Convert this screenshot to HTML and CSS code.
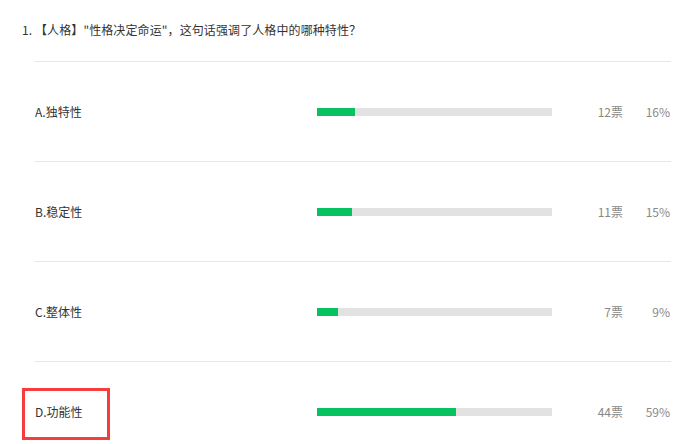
FILE: index.html
```html
<!DOCTYPE html>
<html>
<head>
<meta charset="utf-8">
<link rel="stylesheet" href="styles.css">
</head>
<body>
<div class="question">
  <div class="title">1. 【人格】"性格决定命运"，这句话强调了人格中的哪种特性？</div>
  <div class="options">
    <div class="row">
      <div class="label">A.独特性</div>
      <div class="bar"><div class="fill" style="width:16%"></div></div>
      <div class="votes">12票</div>
      <div class="pct">16%</div>
    </div>
    <div class="row">
      <div class="label">B.稳定性</div>
      <div class="bar"><div class="fill" style="width:15%"></div></div>
      <div class="votes">11票</div>
      <div class="pct">15%</div>
    </div>
    <div class="row">
      <div class="label">C.整体性</div>
      <div class="bar"><div class="fill" style="width:9%"></div></div>
      <div class="votes">7票</div>
      <div class="pct">9%</div>
    </div>
    <div class="row">
      <div class="label marked">D.功能性<span class="highlight"></span></div>
      <div class="bar"><div class="fill" style="width:59%"></div></div>
      <div class="votes">44票</div>
      <div class="pct">59%</div>
    </div>
  </div>
</div>
</body>
</html>
```
FILE: styles.css
```css
html, body {
  margin: 0;
  padding: 0;
  background: #fff;
}
body {
  font-family: "Noto Sans CJK SC", "Liberation Sans", sans-serif;
  font-size: 12px;
  color: #333;
  overflow: hidden;
}
.question {
  padding: 21px 16px 0 22px;
}
.title {
  height: 18px;
  line-height: 18px;
  color: #333;
  letter-spacing: 0.1px;
}
.options {
  margin-top: 22px;
  margin-left: 13px;
  width: 636px;
}
.row {
  border-top: 1px solid #e6e6e6;
  height: 99px;
  display: flex;
  align-items: center;
}
.label {
  width: 282px;
  position: relative;
  line-height: 18px;
  padding-top: 1px;
}
.marked .highlight {
  position: absolute;
  left: -13px;
  top: -14px;
  width: 82px;
  height: 46px;
  border: 3px solid #f53d3d;
}
.bar {
  width: 235px;
  height: 8px;
  background: #e2e2e3;
  display: flex;
}
.fill {
  height: 100%;
  background: #08c161;
}
.votes {
  width: 71px;
  text-align: right;
  color: #888;
  font-size: 12px;
}
.pct {
  width: 47px;
  text-align: right;
  color: #888;
  font-size: 12px;
}
```
